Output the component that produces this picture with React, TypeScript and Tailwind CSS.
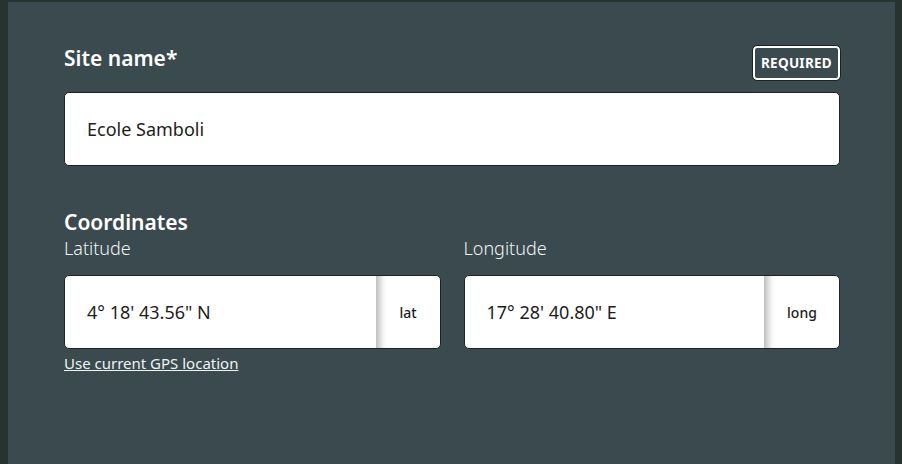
import React from 'react';

const font = { fontFamily: '"Noto Sans", "Open Sans", sans-serif' };

type CoordProps = { label: string; value: string; unit: string; unitWidth: string };

const CoordField: React.FC<CoordProps> = ({ label, value, unit, unitWidth }) => (
  <div className="flex flex-col">
    <label className="text-[18px] leading-[22px] text-[#eef2f2] font-light mt-[3px]">{label}</label>
    <div className="mt-[16px] flex h-[74px] rounded-[5px] border border-[#1b2526] bg-white overflow-hidden">
      <div className="flex-1 flex items-center pl-[22px] text-[18px] text-[#1d1d1d]">{value}</div>
      <div
        className={`${unitWidth} flex items-center justify-center text-[14px] font-medium text-[#1d1d1d] border-l border-[#bfc4c4] shadow-[inset_9px_0_7px_-6px_rgba(0,0,0,0.28)]`}
      >
        {unit}
      </div>
    </div>
  </div>
);

export default function App() {
  return (
    <div className="w-[902px] h-[464px] bg-[#27332f] pl-[8px] pr-[7px] pt-[2px] overflow-hidden" style={font}>
      <div className="h-full bg-[#3b4a4f] pl-[56px] pr-[55px] pt-[44px]">
        {/* Site name */}
        <div className="flex justify-between items-start">
          <h2 className="text-[21px] leading-[24px] font-semibold text-white">Site name*</h2>
          <span className="h-[34px] px-[6px] flex items-center rounded-[4px] border-2 border-white outline outline-1 outline-[#1b2526] text-[13.5px] font-bold tracking-[0.02em] text-white">
            REQUIRED
          </span>
        </div>
        <div className="mt-[12px] h-[74px] rounded-[5px] border border-[#1b2526] bg-white flex items-center pl-[22px] text-[18px] text-[#1d1d1d]">
          Ecole Samboli
        </div>

        {/* Coordinates */}
        <h2 className="mt-[44px] text-[21px] leading-[24px] font-semibold text-white">Coordinates</h2>
        <div className="grid grid-cols-2 gap-[23px]">
          <CoordField label="Latitude" value={'4° 18\' 43.56" N'} unit="lat" unitWidth="w-[64px]" />
          <CoordField label="Longitude" value={'17° 28\' 40.80" E'} unit="long" unitWidth="w-[75px]" />
        </div>
        <a href="#" className="mt-[5px] inline-block text-[15px] leading-[18px] text-[#eef2f2] underline">
          Use current GPS location
        </a>
      </div>
    </div>
  );
}
